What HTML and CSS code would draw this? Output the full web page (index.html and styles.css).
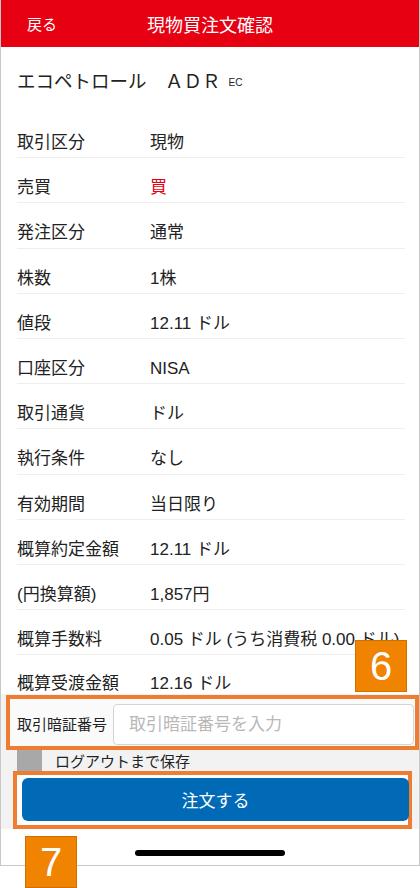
FILE: index.html
```html
<!DOCTYPE html>
<html lang="ja">
<head>
  <meta charset="UTF-8" />
  <meta name="viewport" content="width=device-width, initial-scale=1.0" />
  <title>現物買注文確認</title>
  <link rel="stylesheet" href="styles.css">
</head>
<body>
  <div class="page">
    <div class="phone">
      <div class="header">
        <span class="back">戻る</span>
        <span class="title">現物買注文確認</span>
        <span></span>
      </div>

      <div class="stock">エコペトロール　ＡＤＲ<span class="market">EC</span></div>

      <div class="rows">
        <div class="row"><span class="label">取引区分</span><span class="value">現物</span></div>
        <div class="row"><span class="label">売買</span><span class="value buy">買</span></div>
        <div class="row"><span class="label">発注区分</span><span class="value">通常</span></div>
        <div class="row"><span class="label">株数</span><span class="value">1株</span></div>
        <div class="row"><span class="label">値段</span><span class="value">12.11 ドル</span></div>
        <div class="row"><span class="label">口座区分</span><span class="value">NISA</span></div>
        <div class="row"><span class="label">取引通貨</span><span class="value">ドル</span></div>
        <div class="row"><span class="label">執行条件</span><span class="value">なし</span></div>
        <div class="row"><span class="label">有効期間</span><span class="value">当日限り</span></div>
        <div class="row"><span class="label">概算約定金額</span><span class="value">12.11 ドル</span></div>
        <div class="row"><span class="label">(円換算額)</span><span class="value">1,857円</span></div>
        <div class="row"><span class="label">概算手数料</span><span class="value">0.05 ドル (うち消費税 0.00 ドル)</span></div>
        <div class="row last"><span class="label">概算受渡金額</span><span class="value">12.16 ドル</span></div>
      </div>

      <div class="auth">
        <div class="pw-box">
          <span class="pw-label">取引暗証番号</span>
          <input class="pw-input" type="password" placeholder="取引暗証番号を入力" />
        </div>
        <div class="keep">
          <span class="check"></span>
          <span>ログアウトまで保存</span>
        </div>
        <div class="submit-box">
          <button class="submit">注文する</button>
        </div>
      </div>

      <div class="home"><span class="home-bar"></span></div>
    </div>

    <div class="badge badge-6">6</div>
    <div class="badge badge-7">7</div>
  </div>
</body>
</html>
```

FILE: styles.css
```css
body {
  margin: 0;
  background: #fff;
  font-family: "Liberation Sans", "Noto Sans CJK JP", sans-serif;
  color: #222;
}
.page {
  position: relative;
  width: 420px;
  height: 888px;
  overflow: hidden;
}
.phone {
  width: 420px;
  height: 866px;
  box-sizing: border-box;
  border: 1px solid #c8c8c8;
  border-top: none;
  display: flex;
  flex-direction: column;
}
.header {
  height: 47px;
  background: #e60012;
  color: #fff;
  display: grid;
  grid-template-columns: 1fr auto 1fr;
  align-items: center;
}
.back {
  font-size: 15px;
  padding-left: 26px;
}
.title {
  font-size: 18px;
  padding-top: 1px;
}
.stock {
  height: 66px;
  padding-left: 16px;
  display: flex;
  align-items: center;
  font-size: 18.5px;
}
.market {
  font-size: 10px;
  margin-left: 8px;
  margin-top: 4px;
}
.rows {
  padding: 0 14px 0 16px;
}
.row {
  display: flex;
  padding: 20px 0 4.2px;
  line-height: 20px;
  font-size: 17px;
  border-bottom: 1px solid #eeeeee;
  white-space: nowrap;
}
.row.last {
  border-bottom: none;
  padding: 19px 0 0;
}
.label {
  width: 133px;
  flex-shrink: 0;
}
.buy {
  color: #e60012;
}
.auth {
  height: 135px;
  background: #f2f2f2;
  display: flex;
  flex-direction: column;
}
.pw-box {
  margin: 1px 0 0 5px;
  height: 56px;
  box-sizing: border-box;
  border: 4px solid #ee7d31;
  background: #fafafa;
  display: flex;
  align-items: flex-start;
  padding: 5px 1px 0 7px;
}
.pw-label {
  font-size: 15px;
  width: 96px;
  line-height: 41px;
}
.pw-input {
  flex: 1;
  height: 41px;
  box-sizing: border-box;
  border: 1px solid #d4d4d4;
  border-radius: 4px;
  background: #fff;
  padding: 0 15px;
  font-family: "Liberation Sans", "Noto Sans CJK JP", sans-serif;
  font-size: 17px;
}
.pw-input::placeholder {
  color: #b8b8b8;
}
.keep {
  height: 21px;
  display: flex;
  align-items: center;
  gap: 13px;
  padding-left: 16px;
  font-size: 15px;
}
.check {
  width: 25px;
  height: 21px;
  background: #a8a8a8;
}
.submit-box {
  margin-left: 12px;
  width: 399px;
  height: 59px;
  box-sizing: border-box;
  border: 4px solid #ee7d31;
  background: #fff;
  padding: 3px 0 0 5px;
}
.submit {
  display: block;
  width: 387px;
  height: 43px;
  border: none;
  border-radius: 6px;
  background: #006ab7;
  color: #fff;
  font-family: "Liberation Sans", "Noto Sans CJK JP", sans-serif;
  font-size: 17px;
}
.home {
  flex: 1;
  display: flex;
  justify-content: center;
  align-items: flex-start;
  padding-top: 21px;
}
.home-bar {
  width: 150px;
  height: 6px;
  border-radius: 3px;
  background: #000;
}
.badge {
  position: absolute;
  width: 52px;
  height: 52px;
  box-sizing: border-box;
  background: #f08300;
  border: 1px solid #cf7000;
  color: #fff;
  font-size: 40px;
  line-height: 50px;
  text-align: center;
}
.badge-6 {
  left: 355px;
  top: 640px;
}
.badge-7 {
  left: 25px;
  top: 836px;
}
```
